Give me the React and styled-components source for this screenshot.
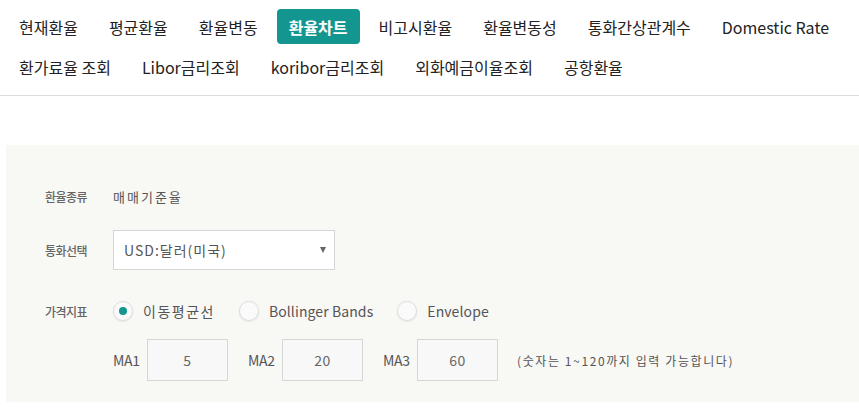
import React, { useState } from "react";
import styled, { createGlobalStyle } from "styled-components";

const GlobalStyle = createGlobalStyle`
  body {
    margin: 0;
    background: #fff;
    font-family: "Noto Sans CJK KR", "Noto Sans", sans-serif;
    color: #333;
  }
`;

const TabBar = styled.ul`
  display: flex;
  flex-wrap: wrap;
  row-gap: 5px;
  column-gap: 7px;
  margin: 0;
  padding: 9px 7px 11px;
  list-style: none;
  border-bottom: 1px solid #dcdcdc;
`;

const Tab = styled.li`
  height: 35px;
  padding: 0 12px;
  display: flex;
  align-items: center;
  border-radius: 4px;
  font-size: 16px;
  font-weight: ${(p) => (p.$active ? 700 : 400)};
  letter-spacing: 0;
  white-space: nowrap;
  color: ${(p) => (p.$active ? "#fff" : "#222")};
  background: ${(p) => (p.$active ? "#13968f" : "transparent")};
  cursor: pointer;
`;

const Panel = styled.div`
  margin: 49px 0 0 6px;
  padding: 41px 0 21px 39px;
  background: #f8f8f5;
`;

const Row = styled.div`
  display: flex;
  align-items: center;
  margin-top: ${(p) => p.$top || 0}px;
  min-height: ${(p) => p.$h || 20}px;
`;

const Label = styled.div`
  width: 68px;
  flex: none;
  font-size: 12px;
  font-weight: 500;
  letter-spacing: -0.5px;
  color: #666;
`;

const Value = styled.div`
  font-size: 13px;
  letter-spacing: 2px;
  color: #555;
`;

const Select = styled.div`
  position: relative;
  width: 222px;
  height: 40px;
  box-sizing: border-box;
  border: 1px solid #d6d6d6;
  background: #fff;
  display: flex;
  align-items: center;
  padding-left: 10px;
  font-size: 14px;
  letter-spacing: 1px;
  color: #555;
`;

const Arrow = styled.span`
  position: absolute;
  right: 8px;
  top: 16px;
  width: 0;
  height: 0;
  border-left: 3px solid transparent;
  border-right: 3px solid transparent;
  border-top: 6px solid #666;
`;

const RadioGroup = styled.div`
  display: flex;
  align-items: center;
  gap: 24px;
`;

const RadioItem = styled.label`
  display: flex;
  align-items: center;
  gap: 10px;
  cursor: pointer;
  font-size: 14px;
  color: #555;
  letter-spacing: ${(p) => (p.$ko ? "1.5px" : "0.1px")};
`;

const RadioCircle = styled.span`
  width: 20px;
  height: 20px;
  box-sizing: border-box;
  border-radius: 50%;
  border: 1px solid #dedede;
  background: #fafafa;
  box-shadow: 0 1px 2px rgba(0, 0, 0, 0.08);
  display: flex;
  align-items: center;
  justify-content: center;
  &::after {
    content: "";
    width: 8px;
    height: 8px;
    border-radius: 50%;
    background: ${(p) => (p.$on ? "#13968f" : "transparent")};
  }
`;

const MaGroup = styled.div`
  display: flex;
  align-items: center;
  padding-left: 68px;
`;

const MaLabel = styled.span`
  width: 34px;
  flex: none;
  font-size: 14px;
  color: #555;
  letter-spacing: -0.3px;
  margin-left: ${(p) => (p.$first ? 0 : 20)}px;
`;

const MaInput = styled.div`
  width: 81px;
  height: 42px;
  box-sizing: border-box;
  border: 1px solid #d6d6d6;
  background: #f8f8f8;
  display: flex;
  align-items: center;
  justify-content: center;
  font-size: 14px;
  color: #666;
  letter-spacing: 0.5px;
`;

const Note = styled.span`
  margin-left: 19px;
  font-size: 12px;
  color: #555;
  letter-spacing: 1.6px;
`;

const tabs = [
  "현재환율",
  "평균환율",
  "환율변동",
  "환율차트",
  "비고시환율",
  "환율변동성",
  "통화간상관계수",
  "Domestic Rate",
  "환가료율 조회",
  "Libor금리조회",
  "koribor금리조회",
  "외화예금이율조회",
  "공항환율",
];

const indicators = [
  { name: "이동평균선", ko: true },
  { name: "Bollinger Bands" },
  { name: "Envelope" },
];

const mas = [
  { label: "MA1", value: 5 },
  { label: "MA2", value: 20 },
  { label: "MA3", value: 60 },
];

export default function App() {
  const [active, setActive] = useState("환율차트");
  const [indicator, setIndicator] = useState("이동평균선");

  return (
    <>
      <GlobalStyle />
      <TabBar>
        {tabs.map((t) => (
          <Tab key={t} $active={t === active} onClick={() => setActive(t)}>
            {t}
          </Tab>
        ))}
      </TabBar>

      <Panel>
        <Row>
          <Label>환율종류</Label>
          <Value>매매기준율</Value>
        </Row>
        <Row $top={24} $h={40}>
          <Label>통화선택</Label>
          <Select>
            USD:달러(미국)
            <Arrow />
          </Select>
        </Row>
        <Row $top={30} $h={22}>
          <Label>가격지표</Label>
          <RadioGroup>
            {indicators.map((i) => (
              <RadioItem key={i.name} $ko={i.ko} onClick={() => setIndicator(i.name)}>
                <RadioCircle $on={indicator === i.name} />
                {i.name}
              </RadioItem>
            ))}
          </RadioGroup>
        </Row>
        <Row $top={17} $h={42}>
          <MaGroup>
            {mas.map((m, idx) => (
              <React.Fragment key={m.label}>
                <MaLabel $first={idx === 0}>{m.label}</MaLabel>
                <MaInput>{m.value}</MaInput>
              </React.Fragment>
            ))}
            <Note>(숫자는 1~120까지 입력 가능합니다)</Note>
          </MaGroup>
        </Row>
      </Panel>
    </>
  );
}
